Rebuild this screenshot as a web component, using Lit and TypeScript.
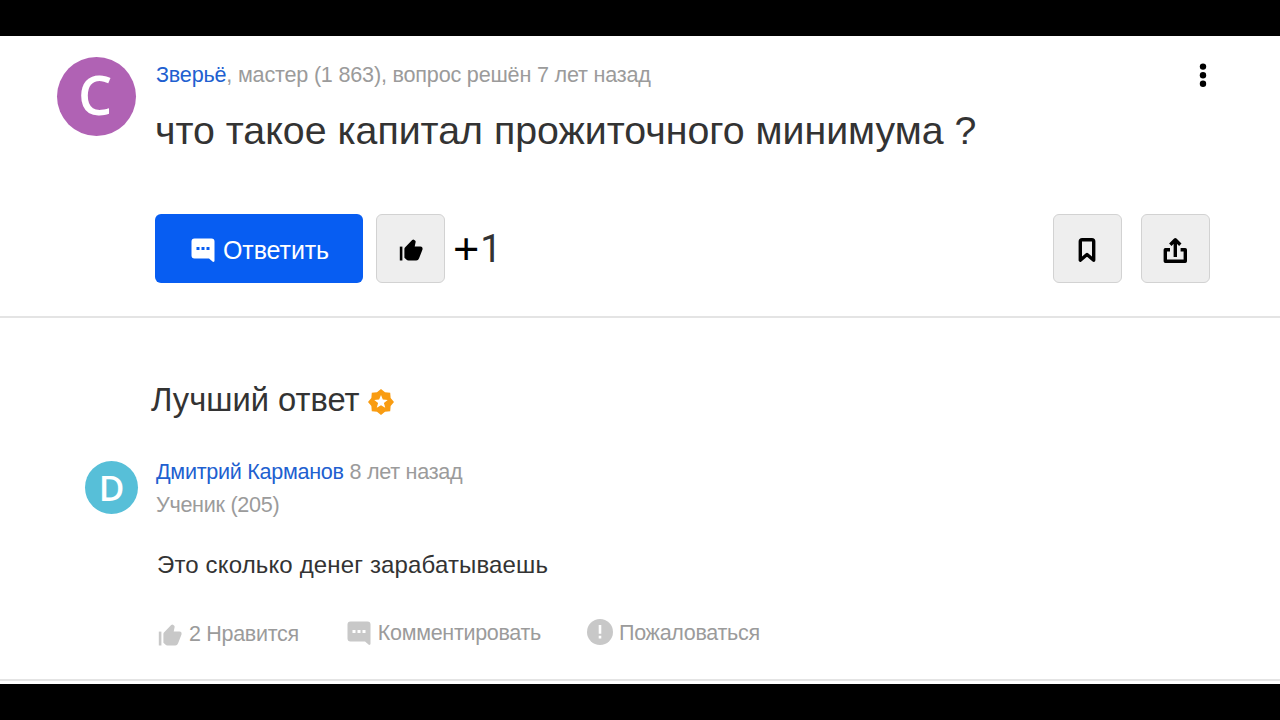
import { LitElement, css, html, svg } from "lit";
import { customElement, property } from "lit/decorators.js";

const icons = {
  comment: svg`
    <path d="M3.500 0.500H20.500a3 3 0 0 1 3 3V22.800a1.200 1.200 0 0 1-2 .8L18 20.500H3.500a3 3 0 0 1-3-3V3.500a3 3 0 0 1 3-3Z" />
    <path class="cutout" d="M5.500 9h3v3h-3zM10.500 9h3v3h-3zM15.500 9h3v3h-3z" />
  `,
  like: svg`
    <path d="M0.800 9.600H3.400V23.500H0.800Z" />
    <path d="M5.400 12Q5.400 11 6.200 10.200L13.200 3Q14.200 2.200 15.300 2.900L16 3.400Q16.900 4.100 16.600 5.300L15.700 9.500H21.500Q24 9.700 23.500 12.400L20.100 21.300Q19.300 23.500 17.200 23.500H9.500Q8.200 23.500 7.300 22.600L5.400 20.700Z" />
  `,
  bookmark: svg`
    <path class="line" d="M4.300 23.200V4.500Q4.300 2.700 6.100 2.700H15.900Q17.700 2.700 17.700 4.500V23.200L11 17.500Z" />
  `,
  share: svg`
    <path class="line" d="M6 12.700H1.300V24.200H21.300V12.700H16.600M11.300 20V3.500M6.300 7.700 11.300 2.700 16.300 7.700" />
  `,
  more: svg`
    <circle cx="12" cy="3.600" r="3.200" />
    <circle cx="12" cy="12.200" r="3.200" />
    <circle cx="12" cy="20.800" r="3.200" />
  `,
  report: svg`
    <circle cx="12" cy="12" r="12" />
    <path class="cutout" d="M10.800 5.500h2.400v8h-2.400zM10.800 15.500h2.400v2.500h-2.400z" />
  `,
  best: svg`
    <path d="M12 0 15.700 3.100 20.500 3.500 20.900 8.300 24 12 20.900 15.700 20.500 20.500 15.700 20.900 12 24 8.300 20.900 3.500 20.500 3.100 15.700 0 12 3.100 8.300 3.500 3.500 8.300 3.100Z" />
    <path class="cutout" d="M12 5.600 13.700 9.800 18.200 10.100 14.700 13 15.900 17.400 12 15 8.100 17.400 9.300 13 5.800 10.100 10.300 9.800Z" />
  `,
};

@customElement("app-icon")
class AppIcon extends LitElement {
  static styles = css`
    :host {
      display: block;
      flex: none;
      width: 24px;
      height: 24px;
    }
    .icon {
      display: block;
      width: 100%;
      height: 100%;
      overflow: visible;
      fill: currentColor;
    }
    .cutout {
      fill: var(--cutout, #fff);
    }
    .line {
      fill: none;
      stroke: currentColor;
      stroke-width: 3.4;
      stroke-linejoin: round;
    }
  `;

  @property() name: keyof typeof icons = "comment";

  render() {
    return html`<svg class="icon" viewBox="0 0 24 24">${icons[this.name]}</svg>`;
  }
}

@customElement("app-root")
class AppRoot extends LitElement {
  static styles = css`
    :host {
      display: flex;
      flex-direction: column;
      box-sizing: border-box;
      width: 1280px;
      height: 720px;
      padding: 36px 0;
      overflow: hidden;
      background: #000;
      color: #333;
      font-family: "Liberation Sans", Arial, sans-serif;
      white-space: nowrap;
    }
    .question,
    .answer {
      box-sizing: border-box;
      background: #fff;
      border-bottom: 2px solid #e4e4e4;
    }
    .question {
      display: flex;
      gap: 19px;
      height: 282px;
      padding: 21px 70px 0 57px;
    }
    .answer {
      height: 363px;
      padding: 62px 70px 0 85px;
    }
    .footer {
      flex: 1;
      background: #fff;
    }
    .avatar {
      display: flex;
      flex: none;
      box-sizing: border-box;
      justify-content: center;
      border-radius: 50%;
      color: #fff;
      font-family: "Open Sans", sans-serif;
      font-weight: 600;
    }
    .avatar.large {
      width: 79px;
      height: 79px;
      padding-right: 3px;
      background: #b062b4;
      font-size: 54px;
      line-height: 75px;
    }
    .avatar.small {
      width: 53px;
      height: 53px;
      margin-top: 5px;
      background: #57bfd8;
      font-size: 35px;
      line-height: 53px;
    }
    .content {
      flex: 1;
    }
    .top {
      display: flex;
      justify-content: space-between;
      align-items: center;
      height: 36px;
      padding-left: 1px;
    }
    .more {
      margin-right: -5px;
      color: #000;
    }
    .meta {
      color: #9b9b9b;
      font-size: 21.6px;
      letter-spacing: -0.2px;
      line-height: 32px;
    }
    .name {
      color: #215fd0;
    }
    .title {
      margin: 13px 0 0;
      font-size: 39.3px;
      font-weight: normal;
      line-height: 48px;
    }
    .toolbar {
      display: flex;
      align-items: center;
      margin-top: 60px;
    }
    .button {
      display: flex;
      box-sizing: border-box;
      justify-content: center;
      align-items: center;
      width: 69px;
      height: 69px;
      border: 1px solid #d2d2d2;
      border-radius: 6px;
      background: #eee;
      color: #000;
    }
    .button.reply {
      --cutout: #075df2;
      gap: 8px;
      width: 208px;
      margin-right: 13px;
      padding: 3px 0 0 2px;
      border: none;
      background: #075df2;
      color: #fff;
      font-size: 25px;
      letter-spacing: -0.1px;
    }
    .votes {
      display: flex;
      flex: 1;
      align-items: center;
      margin-left: 8px;
      font-family: Roboto, sans-serif;
      font-size: 38px;
      line-height: 60px;
    }
    .plus {
      margin-right: 1px;
      color: #000;
      font-family: "Liberation Sans", Arial, sans-serif;
      font-size: 45px;
    }
    .share {
      margin-left: 19px;
    }
    .heading {
      display: flex;
      align-items: center;
      gap: 9px;
      margin: 0 0 0 66px;
      font-size: 32.7px;
      font-weight: normal;
      line-height: 40px;
    }
    .best {
      width: 26px;
      height: 26px;
      margin: 4px 0 0 -1px;
      color: #f99c11;
    }
    .author {
      display: flex;
      gap: 18px;
      margin-top: 36px;
    }
    .author .meta {
      letter-spacing: -0.290px;
      line-height: 32.5px;
    }
    .text {
      margin: 28px 0 0 72px;
      font-size: 24px;
      letter-spacing: 0.150px;
      line-height: 32px;
    }
    .actions {
      display: flex;
      align-items: flex-start;
      margin: 36px 0 0 73px;
      color: #9b9b9b;
      font-size: 21.500px;
      letter-spacing: -0.300px;
      line-height: 32px;
    }
    .action {
      display: flex;
      align-items: center;
      gap: 7px;
    }
    .action app-icon {
      color: #c8c8c8;
    }
    .like {
      margin-top: 1px;
    }
    .comment {
      margin-left: 48px;
    }
    .report {
      margin-left: 46px;
      gap: 6px;
    }
    .report app-icon {
      width: 26px;
      height: 26px;
      margin-top: -2px;
    }
  `;

  render() {
    return html`
      <section class="question">
        <div class="avatar large">С</div>
        <div class="content">
          <div class="top">
            <div class="meta">
              <span class="name">Зверьё</span>, мастер (1 863), вопрос решён 7 лет назад
            </div>
            <app-icon class="more" name="more"></app-icon>
          </div>
          <h1 class="title">что такое капитал прожиточного минимума ?</h1>
          <div class="toolbar">
            <div class="button reply">
              <app-icon name="comment"></app-icon>
              <span>Ответить</span>
            </div>
            <div class="button"><app-icon name="like"></app-icon></div>
            <div class="votes"><span class="plus">+</span>1</div>
            <div class="button"><app-icon name="bookmark"></app-icon></div>
            <div class="button share"><app-icon name="share"></app-icon></div>
          </div>
        </div>
      </section>
      <section class="answer">
        <h2 class="heading">
          <span>Лучший ответ</span>
          <app-icon class="best" name="best"></app-icon>
        </h2>
        <div class="author">
          <div class="avatar small">D</div>
          <div class="meta">
            <div><span class="name">Дмитрий Карманов</span> 8 лет назад</div>
            <div>Ученик (205)</div>
          </div>
        </div>
        <p class="text">Это сколько денег зарабатываешь</p>
        <div class="actions">
          <div class="action like">
            <app-icon name="like"></app-icon>
            <span>2 Нравится</span>
          </div>
          <div class="action comment">
            <app-icon name="comment"></app-icon>
            <span>Комментировать</span>
          </div>
          <div class="action report">
            <app-icon name="report"></app-icon>
            <span>Пожаловаться</span>
          </div>
        </div>
      </section>
      <div class="footer"></div>
    `;
  }
}
